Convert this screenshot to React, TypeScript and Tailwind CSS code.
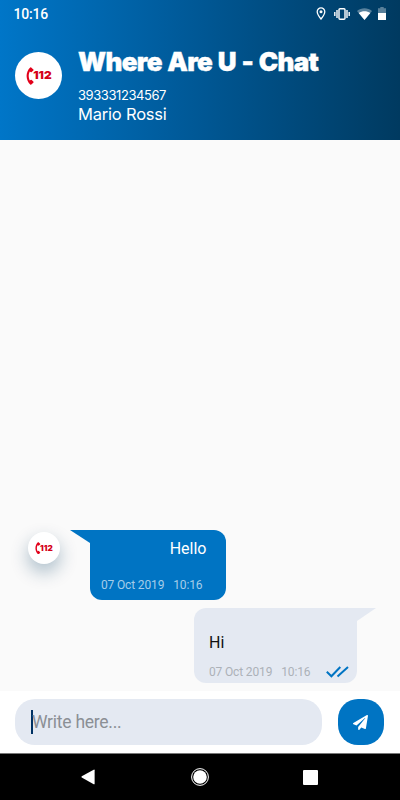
import { FaPaperPlane } from "react-icons/fa";
import { clsx } from "clsx";

type Message = {
  id: number;
  text: string;
  date: string;
  time: string;
};

const received: Message = { id: 1, text: "Hello", date: "07 Oct 2019", time: "10:16" };
const sent: Message = { id: 2, text: "Hi", date: "07 Oct 2019", time: "10:16" };

function Logo({ small = false }: { small?: boolean }) {
  return (
    <span
      className={clsx(
        "flex shrink-0 items-center justify-center rounded-full bg-white",
        small ? "size-8 shadow-[0_8px_18px_rgba(0,58,96,0.32)]" : "size-[47px]"
      )}
    >
      <svg aria-label="112" className={small ? "h-[12.5px] w-[18px]" : "h-[18px] w-[26px]"} viewBox="0 0 26 18">
        <path
          d="M5.2 0.4 7.4 2.4 Q7.9 3 7.3 3.5 L5.7 5 Q5.2 5.4 4.6 5.1 L3.7 4.5 Q1.7 9 3.7 13.4 L4.6 12.9 Q5.2 12.5 5.7 13 L7.3 14.6 Q7.8 15.1 7.3 15.7 L5.3 17.6 Q4.7 18 4.2 17.5 C-0.6 12.9 -0.6 5 4.2 0.5 Q4.7 0 5.2 0.4Z"
          fill="#e2001a"
        />
        <text
          fill="#d40019"
          fontFamily="Inter, sans-serif"
          fontSize="10.8"
          fontWeight="900"
          lengthAdjust="spacingAndGlyphs"
          textLength="18.4"
          x="7.2"
          y="12.4"
        >
          112
        </text>
      </svg>
    </span>
  );
}

function StatusIcons() {
  return (
    <div className="-mt-px flex h-3.5 items-center">
      <svg className="mr-[8px] h-[13px] w-[10px]" fill="none" viewBox="0 0 10 13">
        <path d="M5 .9a3.8 3.8 0 0 0-3.8 3.8C1.2 7.3 5 12 5 12s3.8-4.7 3.8-7.3A3.8 3.8 0 0 0 5 .9Z" stroke="#fff" strokeWidth="1.3" />
        <circle cx="5" cy="4.8" fill="#fff" r="1.5" />
      </svg>
      <svg className="mr-[7px] h-3 w-4" fill="none" viewBox="0 0 16 12">
        <rect height="10.6" rx="1" stroke="#fff" strokeWidth="1.4" width="6" x="5" y=".7" />
        <path d="M3 2v8M13 2v8M.8 4v4M15.2 4v4" stroke="#fff" strokeWidth="1.4" />
      </svg>
      <svg className="mr-[6px] h-3 w-[15px]" viewBox="0 0 15 12">
        <path d="M7.5 12 0 3C4.4-.8 10.6-.8 15 3Z" fill="#fff" fillOpacity=".35" />
        <path d="M7.5 12 1.7 5c3.5-2.2 8.1-2.2 11.6 0Z" fill="#fff" />
      </svg>
      <svg className="h-[13px] w-2" viewBox="0 0 8 13">
        <path d="M2.3 0h3.4v1.2H8V6H0V1.2h2.3Z" fill="#fff" fillOpacity=".35" />
        <path d="M0 6h8v7H0Z" fill="#fff" />
      </svg>
    </div>
  );
}

function Header() {
  return (
    <header className="h-[140px] bg-[linear-gradient(90deg,#0076c8_0%,#005b9b_44%,#003a60_100%)] text-white">
      <div className="flex h-7 items-center justify-between pl-[13.5px] pr-[14px]">
        <span className="font-[Roboto] text-[14px] font-medium leading-none tracking-[-0.2px]">10:16</span>
        <StatusIcons />
      </div>
      <div className="flex pl-[15px] pt-6">
        <Logo />
        <div className="-mt-[5px] ml-4 font-[Inter]">
          <h1 className="whitespace-nowrap text-[26px] font-black leading-[30px] tracking-[-0.65px] [-webkit-text-stroke:0.4px_white] [word-spacing:1px]">
            Where Are U - Chat
          </h1>
          <p className="mt-2.5 text-[13px] leading-4 tracking-[-0.43px]">393331234567</p>
          <p className="mt-px text-[16.5px] leading-5 tracking-[-0.2px]">Mario Rossi</p>
        </div>
      </div>
    </header>
  );
}

function Stamp({ message }: { message: Message }) {
  return (
    <span className="flex gap-[9px] whitespace-nowrap text-[12px] leading-[14px] tracking-[-0.15px]">
      <span>{message.date}</span>
      <span>{message.time}</span>
    </span>
  );
}

function ReceivedMessage({ message }: { message: Message }) {
  return (
    <div className="flex items-start pl-7">
      <span className="mt-0.5">
        <Logo small />
      </span>
      <svg className="ml-[10px] h-[13px] w-5 shrink-0 text-[#0074c3]" viewBox="0 0 20 13">
        <path d="M0 0h20v13Z" fill="currentColor" />
      </svg>
      <div className="-ml-[0.5px] flex h-[70px] w-[136px] flex-col justify-between rounded-xl rounded-tl-none bg-[#0074c3] pb-2 pl-[11.5px] pr-[19px] pt-[9px]">
        <p className="text-right text-[16px] leading-5 text-white">{message.text}</p>
        <div className="text-[#a6cde9]">
          <Stamp message={message} />
        </div>
      </div>
    </div>
  );
}

function SentMessage({ message }: { message: Message }) {
  return (
    <div className="mt-2 flex items-start justify-end pr-6">
      <div className="flex h-[75px] w-[163.5px] flex-col justify-between rounded-xl rounded-tr-none bg-[#e4e9f2] pb-1 pl-[15.5px] pr-2 pt-[25px]">
        <p className="text-[16px] leading-5 text-[#111]">{message.text}</p>
        <div className="flex items-center justify-between text-[#acb1b8]">
          <Stamp message={message} />
          <svg className="h-3 w-[23px]" fill="none" stroke="#0074c3" strokeWidth="2" viewBox="0 0 23 12">
            <path d="m.8 5.8 4.6 4.5L14.3 1M11.5 10.5 22 1" />
          </svg>
        </div>
      </div>
      <svg className="h-[13px] w-[19px] shrink-0 text-[#e4e9f2]" viewBox="0 0 19 13">
        <path d="M0 0h19L0 13Z" fill="currentColor" />
      </svg>
    </div>
  );
}

function Composer() {
  return (
    <div className="flex h-[62px] items-center bg-white pl-[15px] pr-4">
      <div className="flex h-[46px] w-[307px] items-center rounded-[20px] bg-[#e4e9f2] pl-4">
        <span className="h-6 w-0.5 bg-[#003163]" />
        <span className="-ml-px text-[17.5px] leading-6 tracking-[-0.25px] text-[#8b8f95]">Write here...</span>
      </div>
      <button aria-label="Send" className="ml-4 flex h-[46px] w-[46.5px] items-center justify-center rounded-[20px] bg-[#0074c3] text-white">
        <FaPaperPlane size={15} />
      </button>
    </div>
  );
}

function NavigationBar() {
  return (
    <nav className="grid h-[47px] grid-cols-[80px_16px_95px_18px_94px_16px] items-center border-t border-[#777] bg-black text-white">
      <svg className="col-start-2 ml-px h-4 w-[14px]" viewBox="0 0 15 16">
        <path d="M.8 7.3 13.6.2q1-.5 1 .6v14.4q0 1-1 .5L.8 8.6Q0 8 .8 7.3Z" fill="currentColor" />
      </svg>
      <svg className="col-start-4 size-[18px]" viewBox="0 0 18 18">
        <circle cx="9" cy="9" fill="none" r="8.4" stroke="currentColor" />
        <circle cx="9" cy="9" fill="currentColor" r="6.8" />
      </svg>
      <span className="col-start-6 size-[15px] rounded-[1px] bg-white" />
    </nav>
  );
}

export default function App() {
  return (
    <div className="flex h-[800px] w-[400px] flex-col overflow-hidden bg-[#fafafa] font-[Roboto]">
      <Header />
      <main className="flex flex-1 flex-col justify-end pb-2">
        <ReceivedMessage message={received} />
        <SentMessage message={sent} />
      </main>
      <Composer />
      <NavigationBar />
    </div>
  );
}
